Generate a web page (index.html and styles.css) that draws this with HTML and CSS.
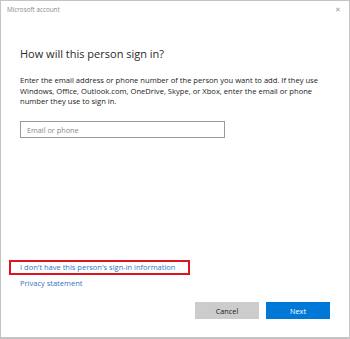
FILE: index.html
```html
<!DOCTYPE html>
<html lang="en">
  <head>
    <meta charset="utf-8" />
    <title>Microsoft account</title>
    <meta name="viewport" content="width=device-width, initial-scale=1" />
    <link rel="stylesheet" href="styles.css">
  </head>
  <body>
    <div class="window">
      <div class="titlebar">
        <span class="title">Microsoft account</span>
        <span class="close">&#x2715;</span>
      </div>
      <main>
        <h1>How will this person sign in?</h1>
        <p class="intro">
          Enter the email address or phone number of the person you want to add. If they use
          Windows, Office, Outlook.com, OneDrive, Skype, or Xbox, enter the email or phone
          number they use to sign in.
        </p>
        <input type="text" class="account-input" placeholder="Email or phone" />
        <div class="links">
          <a href="#" class="link highlighted">I don't have this person's sign-in information</a>
          <a href="#" class="link">Privacy statement</a>
        </div>
        <div class="buttons">
          <button class="btn cancel">Cancel</button>
          <button class="btn next">Next</button>
        </div>
      </main>
    </div>
  </body>
</html>
```

FILE: styles.css
```css
body {
  margin: 0;
  font-family: "Open Sans", "Noto Sans", sans-serif;
  background: #fff;
}
.window {
  width: 350px;
  height: 339px;
  box-sizing: border-box;
  border: 1px solid #c4c4c4;
  border-bottom-width: 2px;
  display: flex;
  flex-direction: column;
}
.titlebar {
  height: 16px;
  display: flex;
  align-items: center;
  justify-content: space-between;
  padding: 0 8px 0 6px;
  color: #8a8a8a;
  font-size: 6.3px;
}
.close {
  font-size: 7px;
  color: #a0a0a0;
}
main {
  flex: 1;
  display: flex;
  flex-direction: column;
  padding: 0 19px 18px 19px;
}
h1 {
  font-weight: 400;
  font-size: 11px;
  line-height: 16px;
  color: #2a2a2a;
  margin: 29px 0 0 0;
}
.intro {
  font-size: 7.6px;
  line-height: 10.5px;
  color: #222;
  margin: 13px 0 0 0;
  width: 305px;
}
.account-input {
  margin-top: 14.5px;
  width: 205px;
  height: 17px;
  box-sizing: border-box;
  border: 1px solid #9a9a9a;
  padding: 0 6px;
  font-family: inherit;
  font-size: 7.3px;
  color: #333;
}
.account-input::placeholder {
  color: #888;
}
.links {
  margin-top: auto;
  display: flex;
  flex-direction: column;
  align-items: flex-start;
}
.link {
  color: #2f75c4;
  text-decoration: none;
  font-size: 7.5px;
  line-height: 11px;
  white-space: nowrap;
}
.highlighted {
  box-sizing: border-box;
  width: 181px;
  margin-left: -11px;
  padding: 0 0 0 9px;
  border: 2px solid #e0141e;
  margin-bottom: 3px;
}
.buttons {
  margin-top: 13px;
  display: flex;
  justify-content: flex-end;
  gap: 7px;
}
.btn {
  width: 64px;
  height: 17px;
  border: none;
  font-family: inherit;
  font-size: 7.3px;
  padding: 0;
}
.cancel {
  background: #cccccc;
  color: #222;
}
.next {
  background: #0078d7;
  color: #fff;
}
```
